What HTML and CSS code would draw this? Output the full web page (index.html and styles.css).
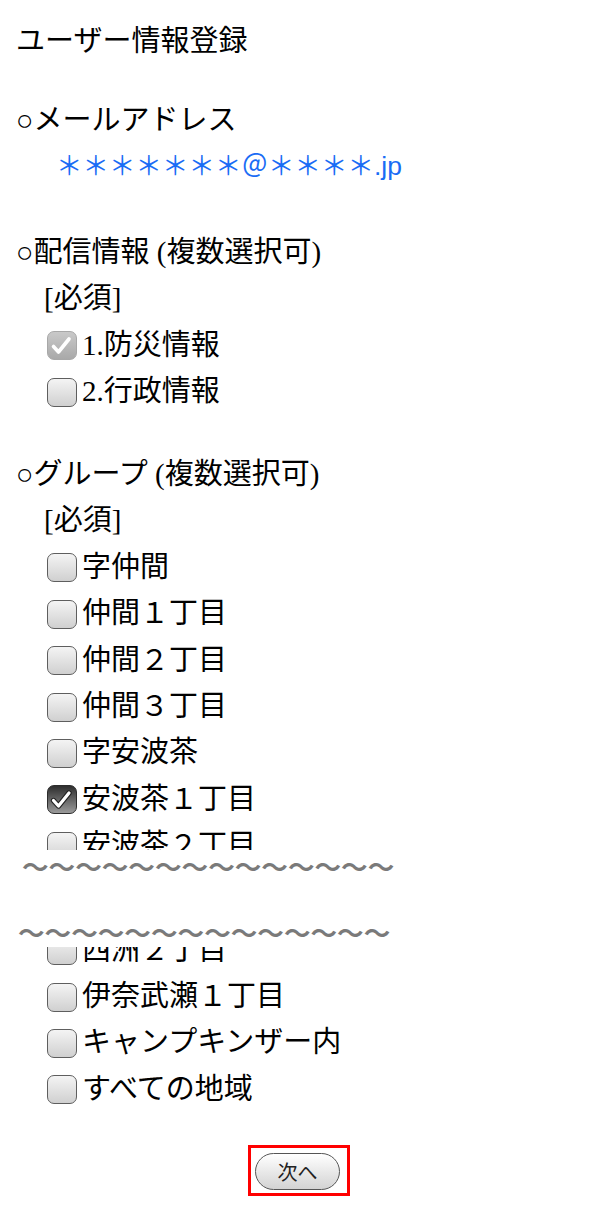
FILE: index.html
```html
<!DOCTYPE html>
<html lang="ja">
<head>
<meta charset="utf-8">
<title>ユーザー情報登録</title>
<link rel="stylesheet" href="styles.css">
</head>
<body>
<main class="page">
  <h1 class="title">ユーザー情報登録</h1>

  <section class="sec sec-mail">
    <p class="head">○メールアドレス</p>
    <p class="email">＊＊＊＊＊＊＊＠＊＊＊＊.jp</p>
  </section>

  <section class="sec sec-dist">
    <p class="head">○配信情報 (複数選択可)</p>
    <p class="req">[必須]</p>
    <label class="opt"><span class="box box-disabled"><svg viewBox="0 0 30 29" width="30" height="29"><path d="M7.5 15.5 L12.5 21 L23 8" fill="none" stroke="#fff" stroke-width="3.6" stroke-linecap="round" stroke-linejoin="round"/></svg></span><span class="lbl">1.防災情報</span></label>
    <label class="opt"><span class="box"></span><span class="lbl">2.行政情報</span></label>
  </section>

  <section class="sec sec-group">
    <p class="head">○グループ (複数選択可)</p>
    <div class="clip-bottom">
      <p class="req">[必須]</p>
      <label class="opt"><span class="box"></span><span class="lbl">字仲間</span></label>
      <label class="opt"><span class="box"></span><span class="lbl">仲間１丁目</span></label>
      <label class="opt"><span class="box"></span><span class="lbl">仲間２丁目</span></label>
      <label class="opt"><span class="box"></span><span class="lbl">仲間３丁目</span></label>
      <label class="opt"><span class="box"></span><span class="lbl">字安波茶</span></label>
      <label class="opt"><span class="box box-checked"><svg viewBox="0 0 30 29" width="30" height="29"><path d="M7.5 15.5 L12.5 21 L23 8" fill="none" stroke="#222" stroke-width="5.4" stroke-linecap="round" stroke-linejoin="round"/><path d="M7.5 15.5 L12.5 21 L23 8" fill="none" stroke="#fff" stroke-width="3.2" stroke-linecap="round" stroke-linejoin="round"/></svg></span><span class="lbl">安波茶１丁目</span></label>
      <label class="opt"><span class="box"></span><span class="lbl">安波茶２丁目</span></label>
    </div>

    <div class="break">
      <p class="wave wave-1">〜〜〜〜〜〜〜〜〜〜〜〜〜〜</p>
      <p class="wave wave-2">〜〜〜〜〜〜〜〜〜〜〜〜〜〜</p>
    </div>

    <div class="clip-top">
      <div class="clip-inner">
        <label class="opt"><span class="box"></span><span class="lbl">西洲２丁目</span></label>
        <label class="opt"><span class="box"></span><span class="lbl">伊奈武瀬１丁目</span></label>
        <label class="opt"><span class="box"></span><span class="lbl">キャンプキンザー内</span></label>
        <label class="opt"><span class="box"></span><span class="lbl">すべての地域</span></label>
      </div>
    </div>
  </section>

  <div class="actions">
    <div class="highlight">
      <button class="next" type="button">次へ</button>
    </div>
  </div>
</main>
</body>
</html>
```

FILE: styles.css
```css
html, body {
  margin: 0;
  padding: 0;
  background: #fff;
}

body {
  font-family: "Liberation Serif", "Noto Sans CJK JP", serif;
  color: #000;
}

.page {
  width: 595px;
  box-sizing: border-box;
  padding: 15px 0 0 16px;
}

p {
  margin: 0;
}

.title {
  margin: 0;
  font-family: "Noto Sans CJK JP", sans-serif;
  font-weight: normal;
  font-size: 29px;
  line-height: 46.4px;
}

.head,
.req,
.opt {
  font-size: 29px;
  line-height: 46.4px;
  height: 46.4px;
}

.sec-mail { margin-top: 35.6px; }
.sec-dist { margin-top: 39.6px; }
.sec-group { margin-top: 36.4px; }

.email {
  padding-left: 40px;
  height: 46px;
  line-height: 46px;
  font-family: "Liberation Sans", "Noto Sans CJK JP", sans-serif;
  font-size: 26.5px;
  color: #1a6cf5;
}

.req {
  padding-left: 28px;
}

.opt {
  display: flex;
  align-items: center;
  padding-left: 31px;
  white-space: nowrap;
}

.box {
  flex: none;
  width: 30px;
  height: 29px;
  box-sizing: border-box;
  border: 1.7px solid #5e5e5e;
  border-radius: 7px;
  background: linear-gradient(#f4f4f4, #d0d0d0);
  margin-top: 2px;
  position: relative;
  overflow: hidden;
}

.box svg {
  position: absolute;
  left: -1.7px;
  top: -1.7px;
}

.box-disabled {
  border-color: #a8a8a8;
  background: linear-gradient(#c9c9c9, #a9a9a9);
}

.box-checked {
  border-color: #2c2c2c;
  background: linear-gradient(#2e2e2e, #9a9a9a);
}

.lbl {
  margin-left: 5px;
}

.clip-bottom {
  height: 352.8px;
  overflow: hidden;
}

.break {
  height: 97px;
  display: flex;
  flex-direction: column;
  margin-left: -16px;
}

.wave {
  font-family: "Noto Sans CJK JP", sans-serif;
  font-size: 26.6px;
  font-weight: bold;
  line-height: 20px;
  height: 20px;
  color: #7a7a7a;
  white-space: nowrap;
}

.wave-1 {
  margin-top: 6px;
  padding-left: 22px;
}

.wave-2 {
  margin-top: 46px;
  padding-left: 18px;
}

.clip-top {
  overflow: hidden;
}

.clip-inner {
  margin-top: -20.6px;
}

.actions {
  display: flex;
  justify-content: center;
  margin-top: 33px;
  margin-left: -16px;
  padding-left: 3px;
}

.highlight {
  width: 102px;
  height: 51px;
  box-sizing: border-box;
  border: 3px solid #ff0000;
  display: flex;
  align-items: center;
  justify-content: center;
  padding: 2px 3px 0 0;
}

.next {
  width: 85px;
  height: 37px;
  box-sizing: border-box;
  border: 1.5px solid #555;
  border-radius: 19px;
  background: linear-gradient(#ffffff, #d3d3d3);
  font-family: "Noto Sans CJK JP", sans-serif;
  font-size: 20px;
  line-height: 1;
  color: #222;
  padding: 0;
}
```
